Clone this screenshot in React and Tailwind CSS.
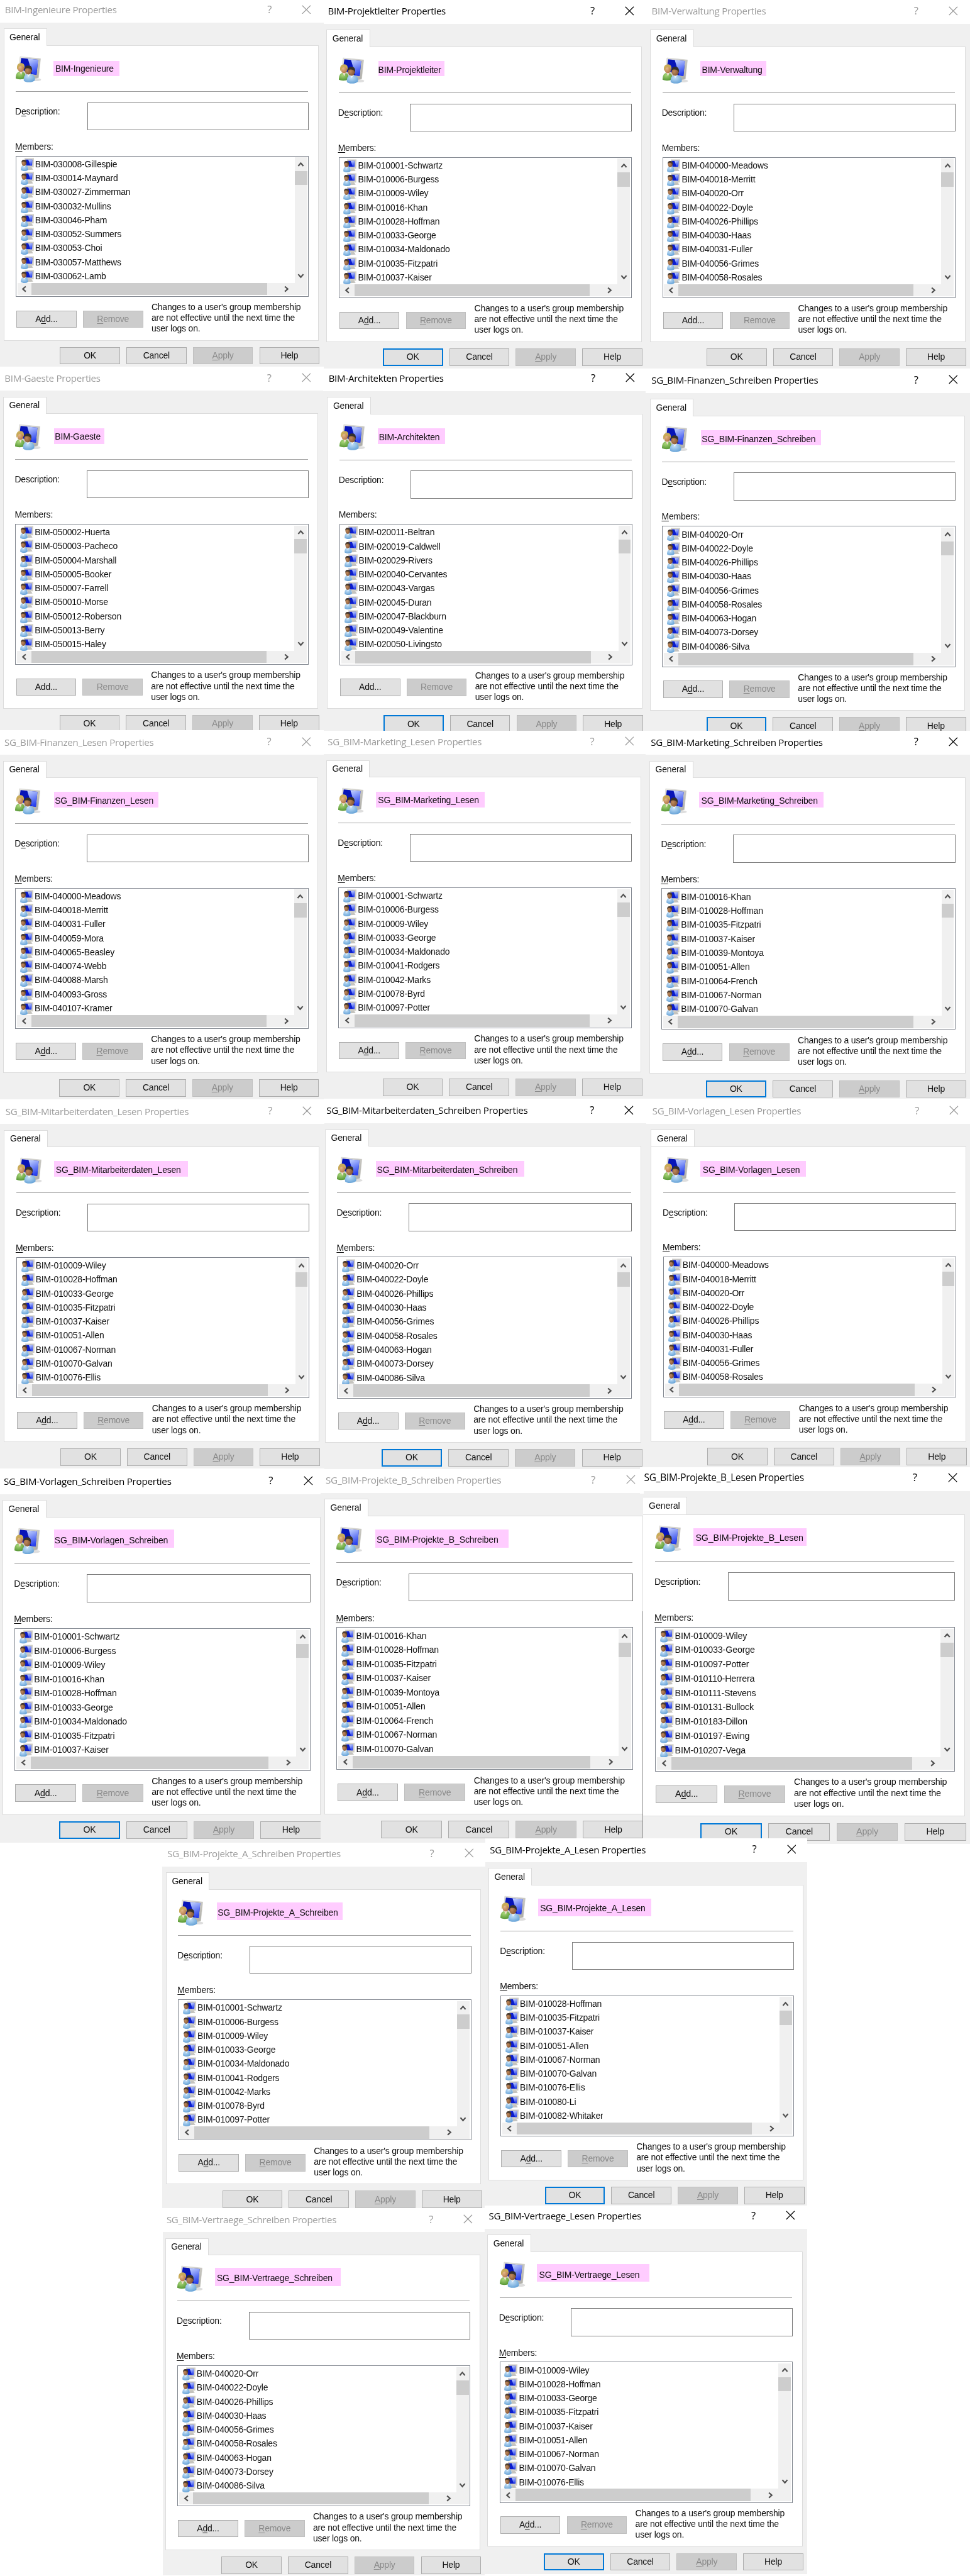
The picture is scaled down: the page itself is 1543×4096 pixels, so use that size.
import React from "react";

const K = 0.92;

const dialogs = [
  { name: "BIM-Ingenieure", clip: [0, 0, 559.5, 634], at: [27, 269.6], hl: [92, 105, 114, 27], ul: true,
    members: ["030008-Gillespie", "030014-Maynard", "030027-Zimmerman", "030032-Mullins", "030046-Pham", "030052-Summers", "030053-Choi", "030057-Matthews", "030062-Lamb"] },
  { name: "BIM-Projektleiter", active: true, clip: [559.5, 0, 557.5, 636.5], at: [585.3, 271.8], hl: [654, 105, 114, 27], ul: true,
    members: ["010001-Schwartz", "010006-Burgess", "010009-Wiley", "010016-Khan", "010028-Hoffman", "010033-George", "010034-Maldonado", "010035-Fitzpatri", "010037-Kaiser"] },
  { name: "BIM-Verwaltung", clip: [1117, 0, 560, 637], at: [1145.1, 271.8], hl: [1211, 105, 114, 27],
    members: ["040000-Meadows", "040018-Merritt", "040020-Orr", "040022-Doyle", "040026-Phillips", "040030-Haas", "040031-Fuller", "040056-Grimes", "040058-Rosales"] },
  { name: "BIM-Gaeste", clip: [0, 634, 559, 628], at: [26.4, 905.7], hl: [93, 740, 87, 27],
    members: ["050002-Huerta", "050003-Pacheco", "050004-Marshall", "050005-Booker", "050007-Farrell", "050010-Morse", "050012-Roberson", "050013-Berry", "050015-Haley"] },
  { name: "BIM-Architekten", active: true, clip: [559, 636.5, 558, 626.5], at: [586.6, 905.3], hl: [653, 740, 117, 27],
    members: ["020011-Beltran", "020019-Caldwell", "020029-Rivers", "020040-Cervantes", "020043-Vargas", "020045-Duran", "020047-Blackburn", "020049-Valentine", "020050-Livingsto"] },
  { name: "SG_BIM-Finanzen_Schreiben", active: true, clip: [1116.5, 637, 560.5, 626], at: [1144.9, 909.4], hl: [1212, 743, 208, 27], ul: true,
    members: ["040020-Orr", "040022-Doyle", "040026-Phillips", "040030-Haas", "040056-Grimes", "040058-Rosales", "040063-Hogan", "040073-Dorsey", "040086-Silva"] },
  { name: "SG_BIM-Finanzen_Lesen", clip: [0, 1262, 559.5, 638], at: [26.2, 1534.9], hl: [93, 1369, 181, 27], ul: true,
    members: ["040000-Meadows", "040018-Merritt", "040031-Fuller", "040059-Mora", "040065-Beasley", "040074-Webb", "040088-Marsh", "040093-Gross", "040107-Kramer"] },
  { name: "SG_BIM-Marketing_Lesen", clip: [559.5, 1263, 557, 636], at: [585, 1534], hl: [650, 1369, 188.5, 27], ul: true,
    members: ["010001-Schwartz", "010006-Burgess", "010009-Wiley", "010033-George", "010034-Maldonado", "010041-Rodgers", "010042-Marks", "010078-Byrd", "010097-Potter"] },
  { name: "SG_BIM-Marketing_Schreiben", active: true, clip: [1116.5, 1263, 560.5, 636], at: [1143.8, 1535.7], s: 1.003, hl: [1208.5, 1369, 215, 27], ul: true,
    members: ["010016-Khan", "010028-Hoffman", "010035-Fitzpatri", "010037-Kaiser", "010039-Montoya", "010051-Allen", "010064-French", "010067-Norman", "010070-Galvan"] },
  { name: "SG_BIM-Mitarbeiterdaten_Lesen", clip: [0, 1900.5, 560.5, 638], at: [28, 2173], hl: [93, 2007, 232, 27], ul: true,
    members: ["010009-Wiley", "010028-Hoffman", "010033-George", "010035-Fitzpatri", "010037-Kaiser", "010051-Allen", "010067-Norman", "010070-Galvan", "010076-Ellis"] },
  { name: "SG_BIM-Mitarbeiterdaten_Schreiben", active: true, clip: [560.5, 1899, 557, 641], at: [582.9, 2172.8], s: 1.004, hl: [650, 2007, 256, 27], ul: true,
    members: ["040020-Orr", "040022-Doyle", "040026-Phillips", "040030-Haas", "040056-Grimes", "040058-Rosales", "040063-Hogan", "040073-Dorsey", "040086-Silva"] },
  { name: "SG_BIM-Vorlagen_Lesen", clip: [1117, 1899, 560, 637], at: [1146.5, 2172.2], hl: [1211, 2007, 182, 27], ul: true,
    members: ["040000-Meadows", "040018-Merritt", "040020-Orr", "040022-Doyle", "040026-Phillips", "040030-Haas", "040031-Fuller", "040056-Grimes", "040058-Rosales"] },
  { name: "SG_BIM-Vorlagen_Schreiben", active: true, clip: [0, 2538, 554, 647], at: [25.1, 2814.6], s: 1.0095, hl: [94, 2644, 207.5, 31], ul: true,
    members: ["010001-Schwartz", "010006-Burgess", "010009-Wiley", "010016-Khan", "010028-Hoffman", "010033-George", "010034-Maldonado", "010035-Fitzpatri", "010037-Kaiser"] },
  { name: "SG_BIM-Projekte_B_Schreiben", clip: [554, 2539.5, 558, 645.5], at: [581.8, 2813.1], s: 1.011, hl: [649, 2644, 230, 31], ul: true,
    members: ["010016-Khan", "010028-Hoffman", "010035-Fitzpatri", "010037-Kaiser", "010039-Montoya", "010051-Allen", "010064-French", "010067-Norman", "010070-Galvan"] },
  { name: "SG_BIM-Projekte_B_Lesen", active: true, clip: [1112, 2536, 565, 651], at: [1132.6, 2812.6], s: 1.0235, hl: [1199, 2641, 195.6, 31], ul: true,
    members: ["010009-Wiley", "010033-George", "010097-Potter", "010110-Herrera", "010111-Stevens", "010131-Bullock", "010183-Dillon", "010197-Ewing", "010207-Vega"] },
  { name: "SG_BIM-Projekte_A_Schreiben", clip: [280, 3185, 560, 631], at: [307.8, 3456], hl: [374.7, 3288, 217.4, 31], ul: true,
    members: ["010001-Schwartz", "010006-Burgess", "010009-Wiley", "010033-George", "010034-Maldonado", "010041-Rodgers", "010042-Marks", "010078-Byrd", "010097-Potter"] },
  { name: "SG_BIM-Projekte_A_Lesen", active: true, clip: [839, 3177, 557, 635], at: [865.4, 3449], hl: [930.8, 3281, 195, 31], ul: true,
    members: ["010028-Hoffman", "010035-Fitzpatri", "010037-Kaiser", "010051-Allen", "010067-Norman", "010070-Galvan", "010076-Ellis", "010080-Li", "010082-Whitaker"] },
  { name: "SG_BIM-Vertraege_Schreiben", clip: [281, 3816, 557, 635], at: [306.4, 4088.3], hl: [371.8, 3920, 217.4, 31], ul: true,
    members: ["040020-Orr", "040022-Doyle", "040026-Phillips", "040030-Haas", "040056-Grimes", "040058-Rosales", "040063-Hogan", "040073-Dorsey", "040086-Silva"] },
  { name: "SG_BIM-Vertraege_Lesen", active: true, clip: [838, 3812, 558, 637], at: [863.6, 4082.3], hl: [928, 3913, 195, 31], ul: true,
    members: ["010009-Wiley", "010028-Hoffman", "010033-George", "010035-Fitzpatri", "010037-Kaiser", "010051-Allen", "010067-Norman", "010070-Galvan", "010076-Ellis"] },
];

function Gradients() {
  return (
    <svg className="absolute h-0 w-0" aria-hidden="true">
      <defs>
        <linearGradient id="glare" x1="0" y1="0" x2="0.3" y2="1">
          <stop offset="0" stopColor="#c9d8ff" />
          <stop offset="1" stopColor="#2a43ee" />
        </linearGradient>
        <linearGradient id="frame" x1="0" y1="0" x2="1" y2="1">
          <stop offset="0" stopColor="#ecebe6" />
          <stop offset="1" stopColor="#a9a8a2" />
        </linearGradient>
        <radialGradient id="green" cx="0.4" cy="0.3" r="0.8">
          <stop offset="0" stopColor="#a9d77a" />
          <stop offset="1" stopColor="#4d8f2b" />
        </radialGradient>
        <radialGradient id="blue" cx="0.4" cy="0.3" r="0.8">
          <stop offset="0" stopColor="#c3e0f8" />
          <stop offset="1" stopColor="#5b9bd3" />
        </radialGradient>
        <radialGradient id="skin" cx="0.35" cy="0.4" r="0.8">
          <stop offset="0" stopColor="#e5b98a" />
          <stop offset="1" stopColor="#a8693a" />
        </radialGradient>
        <radialGradient id="tan" cx="0.35" cy="0.5" r="0.8">
          <stop offset="0" stopColor="#c08a5c" />
          <stop offset="1" stopColor="#6f4527" />
        </radialGradient>
      </defs>
    </svg>
  );
}

function GroupIcon() {
  return (
    <svg className="block h-[46px] w-[46px]" viewBox="0 0 46 46">
      <ellipse cx="35" cy="41" rx="9" ry="2.6" fill="#000" opacity="0.13" />
      <path d="M7.5 1.2 L43 4.6 L39.5 37.5 L30 40 L5 26 Z" fill="url(#frame)" stroke="#c9c8c2" strokeWidth="0.6" />
      <path d="M9.5 3.4 L38.6 6.6 L36 32.5 L26 31 L7 22 Z" fill="#0714b8" />
      <path d="M21 4.7 L38.6 6.6 L36 32.5 L29 31.4 Z" fill="url(#glare)" />
      <path d="M0 39 C0 30 3 27 9 27 C16 27 17 33 17 38 C12 41 5 41 0 39 Z" fill="url(#green)" />
      <path d="M6 26 L12 26 L9.5 33 Z" fill="#efe0cf" />
      <ellipse cx="9" cy="20.5" rx="5.6" ry="7" fill="url(#skin)" />
      <path d="M2.6 24 C1 16 4 12.2 9.5 12.2 C14.5 12.6 16 16 15 22 C14 18 11.5 17 8 17.5 C5 18 4.6 21 2.6 24 Z" fill="#c9ab58" />
      <path d="M14 43 C13 35 16 31 23 31 C31 31 34 36 33 42 C28 46.5 18 46.5 14 43 Z" fill="url(#blue)" />
      <path d="M19 31 L26 31 L22 36 Z" fill="#eef5fb" />
      <ellipse cx="21.8" cy="24.6" rx="6.2" ry="7.6" fill="url(#tan)" />
      <path d="M15.6 24 C14.6 18.5 18 16.4 22 16.6 C27 16.6 29 20 28 26 C26.5 21.5 22 20.5 18 21.5 C16.6 22 16 23 15.6 24 Z" fill="#34302c" />
    </svg>
  );
}

function UserIcon() {
  return (
    <svg className="block h-[23px] w-[23px] shrink-0" viewBox="0 0 23 23">
      <path d="M13 16 L18.5 16 L21.5 20.3 L12.5 21 Z" fill="#c4c3be" />
      <path d="M6.5 0.5 L22.9 0.5 L22.4 16.6 L8 16.6 Z" fill="#d0cec6" />
      <path d="M8 3 L20 3 L19.6 13.2 L9.4 13.2 Z" fill="#0a1ccc" />
      <path d="M13 3 L20 3 L19.6 13.2 L16.6 13.2 Z" fill="url(#glare)" />
      <path d="M0.2 21 C0 15 2.4 12.6 6.4 12.6 C11 12.6 13 16 12.8 20.6 C9.8 23.6 3.2 23.6 0.2 21 Z" fill="url(#blue)" />
      <path d="M4.2 12.8 L8.4 12.8 L6.2 16.8 Z" fill="#f2f7fb" />
      <ellipse cx="5.6" cy="8.8" rx="4" ry="5.2" fill="url(#tan)" />
      <path d="M1.4 8.4 C1 4.4 3.4 3 6 3.2 C9.4 3.2 10.6 6 10 10.6 C9 7 6.6 6 4 6.2 C2.6 6.4 2 7.4 1.4 8.4 Z" fill="#4a3c30" />
    </svg>
  );
}

function Chevron({ turn }) {
  return (
    <svg className={"block h-[12px] w-[12px] " + turn} viewBox="0 0 12 12" fill="none" stroke="#505050" strokeWidth="2.4">
      <path d="M1.6 8.6 L6 3.6 L10.4 8.6" />
    </svg>
  );
}

function Label({ text, u, on }) {
  if (!on) return <span>{text}</span>;
  return (
    <span>
      {text.slice(0, u)}
      <span className="underline decoration-1 underline-offset-[2.5px]">{text[u]}</span>
      {text.slice(u + 1)}
    </span>
  );
}

function Button({ children, disabled, focused }) {
  const tone = disabled
    ? "border border-[#bfbfbf] bg-[#cccccc] text-[#8a8a8a]"
    : focused
      ? "border-[3px] border-[#0078d7] bg-[#e1e1e1] text-[#111]"
      : "border border-[#adadad] bg-[#e1e1e1] text-[#111]";
  return <div className={"flex h-[30px] w-[104px] shrink-0 items-center justify-center " + tone}>{children}</div>;
}

function Dialog({ d }) {
  const s = d.s || 1;
  const z = K * s;
  const left = (d.at[0] - 27 * s - d.clip[0]) / s;
  const top = (d.at[1] - 269.6 * s - d.clip[1]) / s;
  return (
    <div
      className="absolute overflow-hidden bg-[#f0f0f0]"
      style={{ left: d.clip[0] * K, top: d.clip[1] * K, width: d.clip[2] * K, height: d.clip[3] * K }}
    >
      <div className="h-[640px] w-[600px] text-[15.2px] leading-[18.6px] tracking-[-0.2px] text-[#111]" style={{ zoom: z, marginLeft: left, marginTop: top }}>
        <div className="-mt-[20px] -ml-[20px] flex h-[59.4px] w-[640px] items-center bg-white pt-[14.5px] pl-[28.5px]">
          <div className={"flex w-[529.5px] items-center justify-between " + (d.active ? "text-black" : "text-[#9b9b9b]")}>
            <span className="font-['Open_Sans',sans-serif] text-[16.4px] leading-[22px] tracking-[-0.3px] whitespace-nowrap">{d.name} Properties</span>
            <span className="flex w-[78px] shrink-0 items-center justify-between">
              <span className="w-[12px] text-center font-['Open_Sans',sans-serif] text-[18px] leading-[20px]">?</span>
              <svg className="-mt-[1px] block h-[16px] w-[16px]" viewBox="0 0 16 16" stroke="currentColor" strokeWidth="1.3">
                <path d="M0.8 0.8 L15.2 15.2 M15.2 0.8 L0.8 15.2" />
              </svg>
            </span>
          </div>
        </div>
        <div className="pt-[10px] pl-[6px]">
          <div className="relative -mb-[1px] flex h-[30px] w-[75.5px] items-center justify-center border border-b-0 border-[#dcdcdc] bg-white pr-[2px]">General</div>
          <div className="h-[510.5px] w-[545px] border border-[#dcdcdc] bg-white pl-[20px]">
            <div className="flex h-[79.5px] w-[506px] border-b-[1.6px] border-[#a0a0a0] pt-[17px]">
              <GroupIcon />
              <span className="ml-[22.5px] pt-[13.5px] whitespace-nowrap">{d.name}</span>
            </div>
            <div className="mt-[18px] flex w-[507px] justify-between">
              <span className="-ml-[1px] pt-[7px]"><Label text="Description:" u={1} on={d.ul} /></span>
              <div className="h-[48px] w-[383.5px] border-[1.2px] border-[#7a7a7a] bg-white" />
            </div>
            <div className="mt-[19.5px] -ml-[1px]"><Label text="Members:" u={0} on={d.ul} /></div>
            <div className="mt-[6px] flex h-[244px] w-[507px] flex-col border-[1.2px] border-[#828790] bg-white p-[2px]">
              <div className="flex h-[216.5px] shrink-0 justify-between">
                <div className="h-[216.5px] overflow-hidden pl-[5.5px]">
                  {d.members.map((m) => (
                    <div key={m} className="flex h-[24.2px] items-center gap-[2px] whitespace-nowrap">
                      <UserIcon />
                      <span>BIM-{m}</span>
                    </div>
                  ))}
                </div>
                <div className="flex w-[21.5px] flex-col items-center justify-between bg-[#f0f0f0]">
                  <div className="flex flex-col items-center">
                    <div className="flex h-[23.5px] items-center"><Chevron turn="" /></div>
                    <div className="h-[24.5px] w-[21.5px] bg-[#cdcdcd]" />
                  </div>
                  <div className="flex h-[25px] items-center"><Chevron turn="rotate-180" /></div>
                </div>
              </div>
              <div className="flex h-[21.5px] shrink-0 items-center bg-[#f0f0f0]">
                <div className="flex w-[24.5px] justify-center"><Chevron turn="-rotate-90" /></div>
                <div className="h-[21.5px] w-[407px] bg-[#cdcdcd]" />
                <div className="ml-[28px]"><Chevron turn="rotate-90" /></div>
              </div>
            </div>
            <div className="flex pt-[9px]">
              <div className="flex gap-[11px] pt-[14.5px] pl-[1.3px]">
                <Button><Label text="Add..." u={1} on={d.ul} /></Button>
                <Button disabled><Label text="Remove" u={0} on={d.ul} /></Button>
              </div>
              <p className="ml-[14.5px] whitespace-nowrap">
                Changes to a user's group membership<br />
                are not effective until the next time the<br />
                user logs on.
              </p>
            </div>
          </div>
          <div className="flex gap-[11px] pt-[11px] pl-[97.5px]">
            <Button focused={d.active}>OK</Button>
            <Button>Cancel</Button>
            <Button disabled><Label text="Apply" u={0} on={d.ul} /></Button>
            <Button>Help</Button>
          </div>
        </div>
      </div>
    </div>
  );
}

export default function App() {
  return (
    <div className="relative h-[4096px] w-[1543px] overflow-hidden bg-white font-['Liberation_Sans',Arial,sans-serif]">
      <Gradients />
      {dialogs.map((d) => (
        <Dialog key={d.name} d={d} />
      ))}
      {dialogs.map((d) => (
        <div
          key={d.name}
          className="absolute bg-[#ffccff] mix-blend-multiply"
          style={{ left: d.hl[0] * K, top: d.hl[1] * K, width: d.hl[2] * K, height: d.hl[3] * K }}
        />
      ))}
      <div className="absolute top-[2333px] left-[1018px] h-[42px] w-[6px] bg-white" />
      <div className="absolute top-[2562px] left-[1022px] h-[360px] w-px bg-[#8c8c8c]" />
    </div>
  );
}
